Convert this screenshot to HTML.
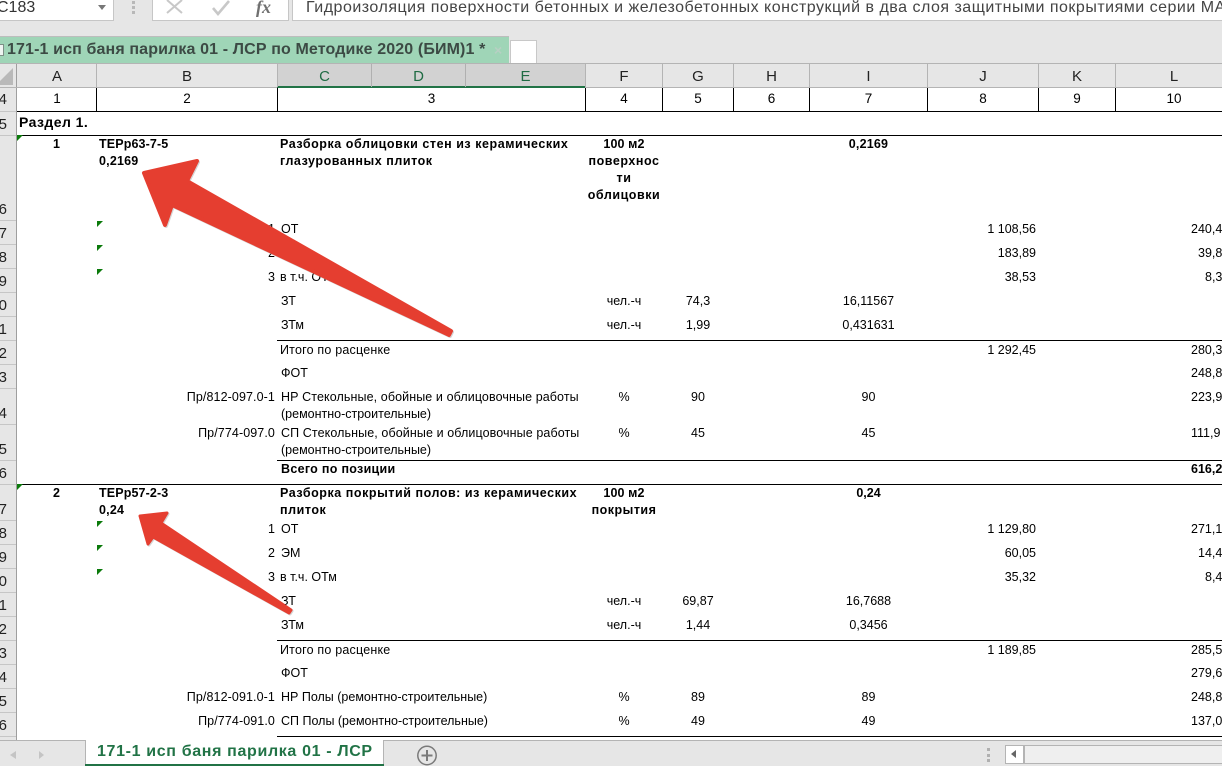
<!DOCTYPE html>
<html lang="ru"><head><meta charset="utf-8"><title>Excel</title>
<style>
html,body{margin:0;padding:0;background:#fff}
#p{position:relative;width:1222px;height:766px;overflow:hidden;background:#fff;font-family:"Liberation Sans",sans-serif;font-size:12.5px;color:#000}
#p div{position:absolute}
.t{white-space:nowrap;line-height:14px;height:14px}
.b{font-weight:bold}
.cy{letter-spacing:.55px}
.c{text-align:center}
.n{text-align:right;left:-40px;width:47px;font-size:15px;line-height:16px;height:16px;color:#222}
.h{text-align:center;font-size:15px;line-height:16px;height:16px;top:69px;color:#222}
.d{font-size:13.5px}
.k{background:#000}
.g{background:#b4b4b4;top:64px;width:1px;height:23px}
.rl{background:#c6c6c6;left:0;width:16px;height:1px}
.gc{width:0;height:0;border-top:6px solid #0b7a0b;border-right:6px solid transparent}
</style></head><body><div id="p">

<!-- top chrome -->
<div style="left:0;top:0;width:1222px;height:64px;background:#e6e6e6"></div>
<div style="left:0;top:0;width:114px;height:21px;background:#fff;border-right:1px solid #c6c6c6;border-bottom:1px solid #c6c6c6;box-sizing:border-box"></div>
<div class="t" style="left:-3px;top:-1px;font-size:16px;line-height:18px;height:18px;color:#333">C183</div>
<div style="left:98px;top:5px;width:0;height:0;border-left:4px solid transparent;border-right:4px solid transparent;border-top:5px solid #777"></div>
<div style="left:132px;top:1px;width:3px;height:3px;background:#b8b8b8"></div>
<div style="left:132px;top:6px;width:3px;height:3px;background:#b8b8b8"></div>
<div style="left:132px;top:11px;width:3px;height:3px;background:#b8b8b8"></div>
<div style="left:152px;top:0;width:137px;height:21px;background:#fff;border:1px solid #c6c6c6;border-top:0;box-sizing:border-box"></div>
<svg style="position:absolute;left:150px;top:0" width="90" height="20" viewBox="0 0 90 20" fill="none">
<path d="M17 0L32 13M32 0L17 13" stroke="#c8c8c8" stroke-width="2"/>
<path d="M63 8L68 14L79 1" stroke="#c8c8c8" stroke-width="2.600"/>
</svg>
<div class="t" style="left:256px;top:-2px;font-family:'Liberation Serif',serif;font-style:italic;font-weight:bold;font-size:18px;line-height:18px;height:18px;color:#707070">fx</div>
<div style="left:292px;top:0;width:930px;height:21px;background:#fff;border-bottom:1px solid #c6c6c6;border-left:1px solid #c6c6c6;box-sizing:border-box"></div>
<div class="t" style="left:306px;top:-1px;font-size:16px;line-height:18px;height:18px;color:#444;letter-spacing:.5px">Гидроизоляция поверхности бетонных и железобетонных конструкций в два слоя защитными покрытиями серии МА</div>

<!-- workbook tab -->
<div style="left:0;top:36px;width:509px;height:27px;background:#9fd5b7;border-top:1px solid #bdbdbd;box-sizing:border-box"></div>
<div style="left:0;top:44px;width:4px;height:12px;background:#eef5f1;border:1px solid #7d8f86;border-left:0;box-sizing:border-box"></div>
<div class="t b" style="left:7px;top:41px;font-size:16px;line-height:18px;height:18px;color:#3c4a44;letter-spacing:.13px">171-1 исп баня парилка 01 - ЛСР по Методике 2020 (БИМ)1 *</div>
<div class="t b" style="left:494px;top:41px;font-size:14px;line-height:18px;height:18px;color:#b7d0c3">×</div>
<div style="left:510px;top:40px;width:27px;height:24px;background:#fff;border:1px solid #c8c8c8;border-bottom:0;box-sizing:border-box"></div>

<!-- header row -->
<div style="left:0;top:63px;width:1222px;height:25px;background:#e6e6e6;border-top:1px solid #b4b4b4;box-sizing:border-box"></div>
<div style="left:277px;top:64px;width:308px;height:22px;background:#d2d2d2"></div>
<div style="left:277px;top:86px;width:308px;height:2px;background:#217346"></div>
<div style="left:0;top:87px;width:277px;height:1px;background:#b4b4b4"></div>
<div style="left:585px;top:87px;width:637px;height:1px;background:#b4b4b4"></div>
<svg style="position:absolute;left:0;top:66px" width="16" height="20"><path d="M13 2V19H0V15Z" fill="#b9b9b9"/></svg>
<div class="g" style="left:16px;background:#9e9e9e"></div>
<div class="g" style="left:96px"></div><div class="g" style="left:277px"></div>
<div class="g" style="left:371px;background:#b0b0b0"></div><div class="g" style="left:465px;background:#b0b0b0"></div>
<div class="g" style="left:585px"></div><div class="g" style="left:662px"></div><div class="g" style="left:733px"></div>
<div class="g" style="left:809px"></div><div class="g" style="left:927px"></div><div class="g" style="left:1038px"></div><div class="g" style="left:1115px"></div>
<div class="h" style="left:17px;width:80px">A</div>
<div class="h" style="left:97px;width:180px">B</div>
<div class="h" style="left:278px;width:93px;color:#1f6b43">C</div>
<div class="h" style="left:372px;width:93px;color:#1f6b43">D</div>
<div class="h" style="left:466px;width:119px;color:#1f6b43">E</div>
<div class="h" style="left:586px;width:76px">F</div>
<div class="h" style="left:663px;width:70px">G</div>
<div class="h" style="left:734px;width:75px">H</div>
<div class="h" style="left:810px;width:117px">I</div>
<div class="h" style="left:928px;width:110px">J</div>
<div class="h" style="left:1039px;width:76px">K</div>
<div class="h" style="left:1116px;width:116px">L</div>

<!-- row header column -->
<div style="left:0;top:88px;width:16px;height:652px;background:#e6e6e6"></div>
<div style="left:16px;top:88px;width:1px;height:652px;background:#9e9e9e"></div>
<div class="rl" style="top:111px"></div><div class="rl" style="top:135px"></div><div class="rl" style="top:220px"></div><div class="rl" style="top:244px"></div><div class="rl" style="top:268px"></div><div class="rl" style="top:292px"></div><div class="rl" style="top:316px"></div><div class="rl" style="top:340px"></div><div class="rl" style="top:364px"></div><div class="rl" style="top:388px"></div><div class="rl" style="top:424px"></div><div class="rl" style="top:460px"></div><div class="rl" style="top:484px"></div><div class="rl" style="top:520px"></div><div class="rl" style="top:544px"></div><div class="rl" style="top:568px"></div><div class="rl" style="top:592px"></div><div class="rl" style="top:616px"></div><div class="rl" style="top:640px"></div><div class="rl" style="top:664px"></div><div class="rl" style="top:688px"></div><div class="rl" style="top:712px"></div><div class="rl" style="top:736px"></div>
<div class="t n" style="top:92px">164</div>
<div class="t n" style="top:117px">165</div>
<div class="t n" style="top:202px">166</div>
<div class="t n" style="top:226px">167</div>
<div class="t n" style="top:250px">168</div>
<div class="t n" style="top:274px">169</div>
<div class="t n" style="top:298px">170</div>
<div class="t n" style="top:322px">171</div>
<div class="t n" style="top:346px">172</div>
<div class="t n" style="top:370px">173</div>
<div class="t n" style="top:406px">174</div>
<div class="t n" style="top:442px">175</div>
<div class="t n" style="top:466px">176</div>
<div class="t n" style="top:502px">177</div>
<div class="t n" style="top:526px">178</div>
<div class="t n" style="top:550px">179</div>
<div class="t n" style="top:574px">180</div>
<div class="t n" style="top:598px">181</div>
<div class="t n" style="top:622px">182</div>
<div class="t n" style="top:646px">183</div>
<div class="t n" style="top:670px">184</div>
<div class="t n" style="top:694px">185</div>
<div class="t n" style="top:718px">186</div>

<!-- borders -->
<div class="k" style="left:17px;top:111px;width:1205px;height:1px"></div>
<div class="k" style="left:17px;top:135px;width:1205px;height:1px"></div>
<div class="k" style="left:96px;top:88px;width:1px;height:23px"></div>
<div class="k" style="left:277px;top:88px;width:1px;height:23px"></div>
<div class="k" style="left:585px;top:88px;width:1px;height:23px"></div>
<div class="k" style="left:662px;top:88px;width:1px;height:23px"></div>
<div class="k" style="left:733px;top:88px;width:1px;height:23px"></div>
<div class="k" style="left:809px;top:88px;width:1px;height:23px"></div>
<div class="k" style="left:927px;top:88px;width:1px;height:23px"></div>
<div class="k" style="left:1038px;top:88px;width:1px;height:23px"></div>
<div class="k" style="left:1115px;top:88px;width:1px;height:23px"></div>
<div class="k" style="left:277px;top:340px;width:945px;height:1px"></div>
<div class="k" style="left:277px;top:460px;width:945px;height:1px"></div>
<div class="k" style="left:17px;top:484px;width:1205px;height:1px"></div>
<div class="k" style="left:277px;top:640px;width:945px;height:1px"></div>
<div class="k" style="left:277px;top:736px;width:945px;height:1px"></div>

<!-- green markers -->
<div class="gc" style="left:17px;top:135px"></div>
<div class="gc" style="left:97px;top:221px"></div>
<div class="gc" style="left:97px;top:245px"></div>
<div class="gc" style="left:97px;top:269px"></div>
<div class="gc" style="left:17px;top:484px"></div>
<div class="gc" style="left:97px;top:521px"></div>
<div class="gc" style="left:97px;top:545px"></div>
<div class="gc" style="left:97px;top:569px"></div>

<!-- row 4 numbers -->
<div class="t c d" style="left:17px;width:80px;top:92px">1</div>
<div class="t c d" style="left:97px;width:180px;top:92px">2</div>
<div class="t c d" style="left:278px;width:307px;top:92px">3</div>
<div class="t c d" style="left:586px;width:76px;top:92px">4</div>
<div class="t c d" style="left:663px;width:70px;top:92px">5</div>
<div class="t c d" style="left:734px;width:75px;top:92px">6</div>
<div class="t c d" style="left:810px;width:117px;top:92px">7</div>
<div class="t c d" style="left:928px;width:110px;top:92px">8</div>
<div class="t c d" style="left:1039px;width:76px;top:92px">9</div>
<div class="t c d" style="left:1116px;width:116px;top:92px">10</div>

<div class="t b" style="left:19px;top:115px;font-size:14px;letter-spacing:.45px">Раздел 1.</div>

<!-- position 1 -->
<div class="t b c" style="left:17px;width:79px;top:137px">1</div>
<div class="t b" style="left:99px;top:137px;letter-spacing:.13px">ТЕРр63-7-5</div>
<div class="t b" style="left:99px;top:154px;letter-spacing:.2px">0,2169</div>
<div class="t b cy" style="left:280px;top:137px">Разборка облицовки стен из керамических</div>
<div class="t b cy" style="left:280px;top:154px">глазурованных плиток</div>
<div class="t b c" style="left:586px;width:76px;top:137px;letter-spacing:.1px">100 м2</div>
<div class="t b c cy" style="left:586px;width:76px;top:154px">поверхнос</div>
<div class="t b c cy" style="left:586px;width:76px;top:171px">ти</div>
<div class="t b c cy" style="left:586px;width:76px;top:188px">облицовки</div>
<div class="t b c" style="left:810px;width:117px;top:137px;letter-spacing:.2px">0,2169</div>

<div class="t" style="right:947px;top:222px">1</div><div class="t" style="left:281px;top:222px">ОТ</div>
<div class="t" style="right:947px;top:246px">2</div>
<div class="t" style="right:947px;top:270px">3</div><div class="t" style="left:280px;top:270px">в т.ч. ОТм</div>
<div class="t" style="left:281px;top:294px">ЗТ</div>
<div class="t" style="left:281px;top:318px">ЗТм</div>
<div class="t" style="left:280px;top:343px;letter-spacing:.2px">Итого по расценке</div>
<div class="t" style="left:281px;top:366px">ФОТ</div>
<div class="t" style="right:947px;top:390px;letter-spacing:.1px">Пр/812-097.0-1</div>
<div class="t" style="left:281px;top:390px;letter-spacing:.1px">НР Стекольные, обойные и облицовочные работы</div>
<div class="t" style="left:281px;top:407px">(ремонтно-строительные)</div>
<div class="t" style="right:947px;top:426px;letter-spacing:.1px">Пр/774-097.0</div>
<div class="t" style="left:281px;top:426px;letter-spacing:.1px">СП Стекольные, обойные и облицовочные работы</div>
<div class="t" style="left:281px;top:443px">(ремонтно-строительные)</div>
<div class="t b" style="left:281px;top:462px;letter-spacing:.3px">Всего по позиции</div>

<div class="t c" style="left:586px;width:76px;top:294px">чел.-ч</div>
<div class="t c" style="left:586px;width:76px;top:318px">чел.-ч</div>
<div class="t c" style="left:586px;width:76px;top:390px">%</div>
<div class="t c" style="left:586px;width:76px;top:426px">%</div>
<div class="t c" style="left:663px;width:70px;top:294px">74,3</div>
<div class="t c" style="left:663px;width:70px;top:318px">1,99</div>
<div class="t c" style="left:663px;width:70px;top:390px">90</div>
<div class="t c" style="left:663px;width:70px;top:426px">45</div>
<div class="t c" style="left:810px;width:117px;top:294px">16,11567</div>
<div class="t c" style="left:810px;width:117px;top:318px">0,431631</div>
<div class="t c" style="left:810px;width:117px;top:390px">90</div>
<div class="t c" style="left:810px;width:117px;top:426px">45</div>

<div class="t" style="right:186px;top:222px">1 108,56</div>
<div class="t" style="right:186px;top:246px">183,89</div>
<div class="t" style="right:186px;top:270px">38,53</div>
<div class="t" style="right:186px;top:343px">1 292,45</div>

<div class="t" style="left:1191px;top:222px">240,4</div>
<div class="t" style="left:1198px;top:246px">39,8</div>
<div class="t" style="left:1205px;top:270px">8,3</div>
<div class="t" style="left:1191px;top:343px">280,3</div>
<div class="t" style="left:1191px;top:366px">248,8</div>
<div class="t" style="left:1191px;top:390px">223,9</div>
<div class="t" style="left:1191px;top:426px">111,9</div>
<div class="t b" style="left:1191px;top:462px">616,2</div>

<!-- position 2 -->
<div class="t b c" style="left:17px;width:79px;top:486px">2</div>
<div class="t b" style="left:99px;top:486px;letter-spacing:.13px">ТЕРр57-2-3</div>
<div class="t b" style="left:99px;top:503px;letter-spacing:.2px">0,24</div>
<div class="t b cy" style="left:280px;top:486px">Разборка покрытий полов: из керамических</div>
<div class="t b cy" style="left:280px;top:503px">плиток</div>
<div class="t b c" style="left:586px;width:76px;top:486px;letter-spacing:.1px">100 м2</div>
<div class="t b c" style="left:586px;width:76px;top:503px;letter-spacing:.5px">покрытия</div>
<div class="t b c" style="left:810px;width:117px;top:486px">0,24</div>

<div class="t" style="right:947px;top:522px">1</div><div class="t" style="left:281px;top:522px">ОТ</div>
<div class="t" style="right:947px;top:546px">2</div><div class="t" style="left:281px;top:546px">ЭМ</div>
<div class="t" style="right:947px;top:570px">3</div><div class="t" style="left:280px;top:570px">в т.ч. ОТм</div>
<div class="t" style="left:281px;top:594px">ЗТ</div>
<div class="t" style="left:281px;top:618px">ЗТм</div>
<div class="t" style="left:280px;top:643px;letter-spacing:.2px">Итого по расценке</div>
<div class="t" style="left:281px;top:666px">ФОТ</div>
<div class="t" style="right:947px;top:690px;letter-spacing:.1px">Пр/812-091.0-1</div>
<div class="t" style="left:281px;top:690px">НР Полы (ремонтно-строительные)</div>
<div class="t" style="right:947px;top:714px;letter-spacing:.1px">Пр/774-091.0</div>
<div class="t" style="left:281px;top:714px">СП Полы (ремонтно-строительные)</div>

<div class="t c" style="left:586px;width:76px;top:594px">чел.-ч</div>
<div class="t c" style="left:586px;width:76px;top:618px">чел.-ч</div>
<div class="t c" style="left:586px;width:76px;top:690px">%</div>
<div class="t c" style="left:586px;width:76px;top:714px">%</div>
<div class="t c" style="left:663px;width:70px;top:594px">69,87</div>
<div class="t c" style="left:663px;width:70px;top:618px">1,44</div>
<div class="t c" style="left:663px;width:70px;top:690px">89</div>
<div class="t c" style="left:663px;width:70px;top:714px">49</div>
<div class="t c" style="left:810px;width:117px;top:594px">16,7688</div>
<div class="t c" style="left:810px;width:117px;top:618px">0,3456</div>
<div class="t c" style="left:810px;width:117px;top:690px">89</div>
<div class="t c" style="left:810px;width:117px;top:714px">49</div>

<div class="t" style="right:186px;top:522px">1 129,80</div>
<div class="t" style="right:186px;top:546px">60,05</div>
<div class="t" style="right:186px;top:570px">35,32</div>
<div class="t" style="right:186px;top:643px">1 189,85</div>

<div class="t" style="left:1191px;top:522px">271,1</div>
<div class="t" style="left:1198px;top:546px">14,4</div>
<div class="t" style="left:1205px;top:570px">8,4</div>
<div class="t" style="left:1191px;top:643px">285,5</div>
<div class="t" style="left:1191px;top:666px">279,6</div>
<div class="t" style="left:1191px;top:690px">248,8</div>
<div class="t" style="left:1191px;top:714px">137,0</div>

<!-- arrows -->
<svg style="position:absolute;left:0;top:0" width="1222" height="766" viewBox="0 0 1222 766">
<g stroke-linejoin="round">
<path d="M144 173L197 161L187 181L451 331L449 335L172 205L165 225Z" fill="#8a8a8a" opacity=".35" stroke="#8a8a8a" stroke-width="4" transform="translate(1,1)"/>
<path d="M144 173L197 161L187 181L451 331L449 335L172 205L165 225Z" fill="#e53e30" stroke="#e53e30" stroke-width="4"/>
<path d="M140 516L167 513L161 523L291 610L289 613L153 537L148 544Z" fill="#8a8a8a" opacity=".35" stroke="#8a8a8a" stroke-width="3" transform="translate(1,1)"/>
<path d="M140 516L167 513L161 523L291 610L289 613L153 537L148 544Z" fill="#e53e30" stroke="#e53e30" stroke-width="3"/>
</g>
</svg>

<!-- bottom bar -->
<div style="left:0;top:740px;width:1222px;height:26px;background:#e6e6e6;border-top:1px solid #b4b4b4;box-sizing:border-box"></div>
<div style="left:85px;top:740px;width:299px;height:26px;background:#fff;border-left:1px solid #b4b4b4;border-right:1px solid #b4b4b4;box-sizing:border-box"></div>
<div style="left:85px;top:764px;width:299px;height:2px;background:#217346"></div>
<div class="t b" style="left:97px;top:743px;font-size:16px;line-height:18px;height:18px;color:#217346;letter-spacing:.65px">171-1 исп баня парилка 01 - ЛСР</div>
<svg style="position:absolute;left:0;top:741px" width="450" height="25" fill="none">
<path d="M16 10V18L10 14Z" fill="#c4c4c4"/><path d="M39 10V18L44 14Z" fill="#c4c4c4"/>
<circle cx="427" cy="14.500" r="9.200" stroke="#7a7a7a" stroke-width="1.500"/>
<path d="M427 9V20M421.500 14.500H432.500" stroke="#7a7a7a" stroke-width="2"/>
</svg>
<div style="left:987px;top:748px;width:3px;height:3px;background:#b0b0b0"></div>
<div style="left:987px;top:754px;width:3px;height:3px;background:#b0b0b0"></div>
<div style="left:987px;top:759px;width:3px;height:3px;background:#b0b0b0"></div>
<div style="left:1005px;top:745px;width:19px;height:19px;background:#fff;border:1px solid #b4b4b4;box-sizing:border-box"></div>
<div style="left:1011px;top:750px;width:0;height:0;border-top:4.500px solid transparent;border-bottom:4.500px solid transparent;border-right:5px solid #666"></div>
<div style="left:1024px;top:745px;width:198px;height:19px;background:#efefef;border:1px solid #b4b4b4;border-right:0;box-sizing:border-box"></div>
</div></body></html>
